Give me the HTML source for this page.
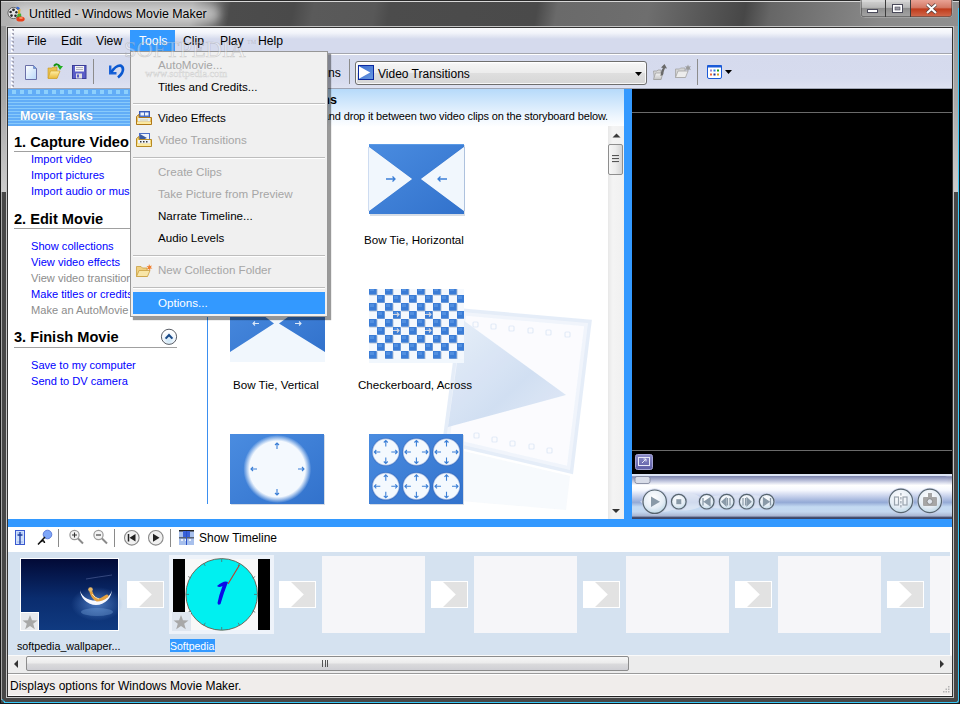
<!DOCTYPE html>
<html><head><meta charset="utf-8">
<style>
*{margin:0;padding:0;box-sizing:border-box}
html,body{width:960px;height:704px;overflow:hidden;background:#5a5a5a;font-family:"Liberation Sans",sans-serif}
.a{position:absolute}
.t{position:absolute;white-space:nowrap;font-family:"Liberation Sans",sans-serif;line-height:1}
#frame{left:0;top:0;width:960px;height:704px;background:linear-gradient(180deg,#6a6a6a 0,#505050 28px,#5c5c5c 100%)}
#title{left:0;top:2px;width:960px;height:24px;background:linear-gradient(100deg,#b2b2b2 0,#a6a6a6 190px,#4c4c4c 228px,#4a4a4a 290px,#5a5a5a 310px,#585858 370px,#4c4c4c 385px,#4a4a4a 530px,#6a6a6a 550px,#6e6e6e 640px,#555 700px,#474747 735px,#666 760px,#7a7a7a 820px,#8a8a8a 870px,#909090 960px)}
#client{left:8px;top:28px;width:944px;height:669px;background:#fff}
#menubar{left:8px;top:28px;width:944px;height:25px;background:linear-gradient(180deg,#fbfcfe 0,#f2f4fa 5px,#dfe3f1 9px,#d5daed 11px,#d5daed 100%)}
#tb{left:8px;top:54px;width:944px;height:35px;background:linear-gradient(180deg,#fff 0,#fff 1px,#d5daed 1px,#d6dbee 70%,#dde1f1 95%,#eef0f8 100%)}
.mi{font-size:12.2px;color:#000;top:35px}
#menu{left:130px;top:51px;width:198px;height:266px;background:#f0f0f0;border:1px solid #979797;box-shadow:3px 3px 1px rgba(0,0,0,.4)}
.mt{font-size:11.6px;color:#000;left:27px}
.md{color:#a6a6a6}
.sep{left:2px;width:192px;height:2px;background:#bdbdbd;border-bottom:1px solid #fff}
#lp{left:8px;top:89px;width:199px;height:429px;background:#fff}
#hdr{left:8px;top:89px;width:199px;height:37px;background:#62adf7}
.h{font-size:14.6px;font-weight:bold;color:#000;left:14px}
.ul{left:14px;width:163px;height:1px;background:#a0a0a0}
.lk{font-size:11.1px;color:#0000ff;left:31px}
.gr{color:#8c8c8c}
#cp{left:208px;top:89px;width:416px;height:429px;background:#fff}
#cph{left:208px;top:89px;width:416px;height:38px;background:linear-gradient(180deg,#b6dafa 0,#d2e8fc 14px,#eef6fe 28px,#fff 38px)}
#pv{left:632px;top:89px;width:320px;height:429px;background:#000}
.cap{font-size:11.6px;color:#000}
.blue{background:#3399ff}
</style></head><body>
<div class="a" style="left:0;top:0;width:960px;height:704px;background:#474747"></div>
<div class="a" style="left:0;top:0;width:960px;height:192px;background:linear-gradient(180deg,#949494 0,#a8a8a8 100px,#cccccc 192px)"></div>
<div id="title" class="a"></div>
<div class="a" style="left:0;top:0;width:960px;height:1px;background:#2a2a2a"></div>
<div class="a" style="left:1px;top:1px;width:958px;height:1px;background:#d8d8d8"></div>
<div class="a" style="left:0;top:0;width:1px;height:704px;background:#1a1a1a"></div>
<div class="a" style="left:959px;top:0;width:1px;height:704px;background:#1a1a1a"></div>
<div class="a" style="left:958px;top:8px;width:1px;height:692px;background:#38c8f8"></div>
<div class="a" style="left:4px;top:702px;width:952px;height:1px;background:#38c8f8"></div><div class="a" style="left:2px;top:699px;width:3px;height:3px;border-left:1px solid #38a8c8;border-bottom:1px solid #38c8f8;border-radius:0 0 0 3px"></div><div class="a" style="left:955px;top:699px;width:4px;height:4px;border-right:1px solid #38c8f8;border-bottom:1px solid #38c8f8;border-radius:0 0 3px 0"></div>
<div class="a" style="left:0;top:703px;width:960px;height:1px;background:#1a1a1a"></div>
<div class="a" style="left:14px;top:5px;width:206px;height:18px;border-radius:9px;background:rgba(235,235,235,.55);filter:blur(4px)"></div>
<!-- title icon -->
<svg class="a" style="left:7px;top:5px" width="18" height="17" viewBox="0 0 18 17">
<circle cx="6.5" cy="8" r="5.6" fill="#e4e4e4" stroke="#5a5a5a" stroke-width=".9"/>
<circle cx="6.5" cy="4.8" r="1.4" fill="#2a2a2a"/><circle cx="3.6" cy="7" r="1.3" fill="#2a2a2a"/><circle cx="4.5" cy="10.6" r="1.3" fill="#2a2a2a"/><circle cx="8.5" cy="10.8" r="1.3" fill="#2a2a2a"/><circle cx="9.4" cy="7.2" r="1.2" fill="#2a2a2a"/>
<path d="M9 2 Q12 1 13 4 L11 5Z" fill="#3a6ad0"/>
<path d="M11 5 L13.5 4 L13 9 L11 9Z" fill="#e0b030"/>
<path d="M10.5 9 L14 8.5 L14.5 13 L10 13Z" fill="#40b030"/>
<ellipse cx="13.5" cy="14" rx="4.2" ry="2.6" fill="#e8401a"/><ellipse cx="14" cy="13" rx="2" ry="1" fill="#f89060"/>
</svg>
<div class="t" style="left:29px;top:8px;font-size:12.4px;color:#000;text-shadow:0 0 3px rgba(255,255,255,.6)">Untitled - Windows Movie Maker</div>
<!-- window buttons -->
<svg class="a" style="left:859px;top:0" width="96" height="20" viewBox="859 0 96 20">
<defs>
<linearGradient id="wb" x1="0" y1="0" x2="0" y2="1"><stop offset="0" stop-color="#d4d4d4"/><stop offset=".45" stop-color="#b8b8b8"/><stop offset=".5" stop-color="#8e8e8e"/><stop offset="1" stop-color="#a4a4a4"/></linearGradient>
<linearGradient id="wc" x1="0" y1="0" x2="0" y2="1"><stop offset="0" stop-color="#e8a294"/><stop offset=".45" stop-color="#d47a66"/><stop offset=".55" stop-color="#c03c1c"/><stop offset="1" stop-color="#d0684c"/></linearGradient>
</defs>
<path d="M860.5 0 V13.5 Q860.5 17.5 864.5 17.5 H948.5 Q952.5 17.5 952.5 13.5 V0" fill="#3c3c3c" stroke="#e0e0e0" stroke-opacity=".5"/>
<path d="M861.5 0 H885 V16.5 H864.5 Q861.5 16.5 861.5 13.5Z" fill="url(#wb)"/>
<rect x="886" y="0" width="24" height="16.5" fill="url(#wb)"/>
<path d="M911 0 H951.5 V13.5 Q951.5 16.5 948.5 16.5 H911Z" fill="url(#wc)"/>
<path d="M861.5 1 H885 M886 1 H910" stroke="#e8e8e8" stroke-opacity=".6"/>
<rect x="867.5" y="9.5" width="10" height="3" fill="#fff" stroke="#4a4a5a"/>
<rect x="892.5" y="4.5" width="10" height="8" fill="#fff" stroke="#4a4a5a"/><rect x="895" y="7" width="5" height="3" fill="#9a9aa4" stroke="#4a4a5a" stroke-width=".6"/>
<path d="M927 4.5 L931.5 8.5 L936 4.5 M927 13 L931.5 9 L936 13" stroke="#4a3a3a" stroke-width="3.6" fill="none" stroke-linejoin="round"/>
<path d="M927 4.5 L931.5 8.5 L936 4.5 M927 13 L931.5 9 L936 13" stroke="#fff" stroke-width="2.2" fill="none"/>
</svg>
<div class="a" style="left:6px;top:26px;width:948px;height:672px;background:#c4c4c4"></div>
<div class="a" style="left:1px;top:192px;width:1px;height:508px;background:#a8a8a8"></div>
<div id="client" class="a"></div>
<div class="a" style="left:7px;top:27px;width:946px;height:670px;border:1px solid #333"></div>
<div id="menubar" class="a"></div>
<div class="a" style="left:8px;top:53px;width:944px;height:1px;background:#a4a6ae"></div>
<div id="tb" class="a"></div>
<div class="a" style="left:8px;top:88px;width:944px;height:1px;background:#9ea4b4"></div>
<!-- grippers -->
<svg class="a" style="left:11px;top:29px" width="4" height="60" viewBox="0 0 4 60"><defs><pattern id="gp" width="4" height="4" patternUnits="userSpaceOnUse"><rect x="0" y="1" width="2" height="2" fill="#fff"/><rect x="1" y="0" width="2" height="2" fill="#a4a4b4"/><rect x="1" y="1" width="1" height="1" fill="#d8d8e4"/></pattern></defs><rect x="0" y="0" width="4" height="23" fill="url(#gp)"/><rect x="0" y="28" width="4" height="32" fill="url(#gp)"/></svg>


<div class="a" style="left:130px;top:30px;width:45px;height:22px;background:#3399ff"></div>
<div class="t mi" style="left:27px">File</div>
<div class="t mi" style="left:61px">Edit</div>
<div class="t mi" style="left:96px">View</div>
<div class="t mi" style="left:139px;color:#fff">Tools</div>
<div class="t mi" style="left:183px">Clip</div>
<div class="t mi" style="left:220px">Play</div>
<div class="t mi" style="left:258px">Help</div>

<!-- toolbar icons -->
<svg class="a" style="left:24px;top:64px" width="14" height="17" viewBox="0 0 14 17"><defs><linearGradient id="nd" x1="0" y1="0" x2="1" y2="1"><stop offset="0" stop-color="#fff"/><stop offset="1" stop-color="#b8d8fa"/></linearGradient></defs><path d="M1.5 1.5 H9.5 L12.5 4.5 V15.5 H1.5 Z" fill="url(#nd)" stroke="#6a70a8"/><path d="M9.5 1.5 V4.5 H12.5" fill="#6aa0e8" stroke="#6a70a8" stroke-width=".6"/></svg>
<svg class="a" style="left:47px;top:63px" width="18" height="17" viewBox="0 0 18 17"><defs><linearGradient id="fo" x1="0" y1="0" x2="0" y2="1"><stop offset="0" stop-color="#fff0a8"/><stop offset="1" stop-color="#e8b838"/></linearGradient></defs><path d="M1 5 H5 L6 4 H10 V15 H1Z" fill="#e8c050" stroke="#c89820" stroke-width=".6"/><path d="M1 15.5 L3.5 8 H13 L10 15.5Z" fill="url(#fo)" stroke="#d0a028" stroke-width=".7"/><path d="M7 3 Q10 -.5 13 3.5" stroke="#109010" stroke-width="2" fill="none"/><path d="M10.5 3 H16 L13 7Z" fill="#20b020"/></svg>
<svg class="a" style="left:72px;top:65px" width="15" height="14" viewBox="0 0 15 14"><rect x=".5" y=".5" width="13.5" height="13" fill="#5a5ec8" stroke="#3c3e98"/><rect x="3" y="1" width="9" height="5.5" fill="#f4f4f4"/><path d="M4 2.5 H11 M4 4.5 H11" stroke="#a0a0b0" stroke-width=".8"/><rect x="4" y="8.5" width="6" height="5" fill="#e0e0e0"/><rect x="5" y="9.5" width="2" height="3" fill="#5a5ec8"/></svg>
<div class="a" style="left:93px;top:59px;width:1px;height:25px;background:#8c8c8c"></div>
<svg class="a" style="left:107px;top:63px" width="18" height="16" viewBox="0 0 18 16"><path d="M3.2 2.5 V10.2 H9.5" fill="none" stroke="#1a62d8" stroke-width="2.4"/><path d="M4 9.5 Q9 2 13.5 2.5 Q17.5 4.5 15 10 Q13.5 12.5 11 14.5" fill="none" stroke="#0a58d0" stroke-width="2.6"/></svg>
<div class="t" style="left:328px;top:67px;font-size:12.2px">ns</div>
<div class="a" style="left:349px;top:59px;width:1px;height:25px;background:#8c8c8c"></div>
<!-- combo -->
<div class="a" style="left:355px;top:61px;width:292px;height:24px;border:1px solid #6e6e6e;border-radius:3px;background:linear-gradient(180deg,#fff 0,#f4f4f4 10%,#ececec 48%,#dedede 52%,#d6d6d6 100%);box-shadow:inset 0 0 0 1px rgba(255,255,255,.8)"></div>
<svg class="a" style="left:358px;top:65px" width="16" height="15" viewBox="0 0 16 15"><defs><linearGradient id="vt" x1="0" y1="0" x2="1" y2="1"><stop offset="0" stop-color="#3a6ad0"/><stop offset="1" stop-color="#6a9ae0"/></linearGradient></defs><rect x=".5" y=".5" width="15" height="14" fill="url(#vt)" stroke="#0a28a0"/><path d="M1 1.2 L12.2 7.5 L1 13.8Z" fill="#fff"/></svg>
<div class="t" style="left:378px;top:68px;font-size:12px">Video Transitions</div>
<svg class="a" style="left:635px;top:72px" width="8" height="5"><path d="M0 0 H7 L3.5 4Z" fill="#000"/></svg>
<svg class="a" style="left:652px;top:63px" width="16" height="18" viewBox="0 0 16 18"><defs><linearGradient id="gf" x1="0" y1="0" x2="0" y2="1"><stop offset="0" stop-color="#f4f4f4"/><stop offset="1" stop-color="#c4c4c4"/></linearGradient></defs><path d="M1.5 8 H5 L6 7 H9 V16.5 H2.5Z" fill="#d8d8d8" stroke="#a0a0a0" stroke-width=".8"/><path d="M1.5 16.5 L3.5 10 H11 L9 16.5Z" fill="url(#gf)" stroke="#a0a0a0" stroke-width=".8"/><path d="M8.5 13 Q9 7 11 5 L9 4.5 L12.5 1 L15 5.5 L13 5.2 Q11.5 8 11 12Z" fill="#6a6a6a"/></svg>
<svg class="a" style="left:675px;top:64px" width="17" height="15" viewBox="0 0 17 15"><path d="M.5 13.5 V5 H4.5 L5.5 4 H10 V13.5Z" fill="#d4d4d4" stroke="#a4a4a4" stroke-width=".8"/><path d="M.5 13.5 L3 7 H13 L10.5 13.5Z" fill="#ececec" stroke="#a4a4a4" stroke-width=".8"/><path d="M13 .5 L13.8 2.6 L16 2.2 L14.6 4 L16 5.8 L13.8 5.4 L13 7.5 L12.2 5.4 L10 5.8 L11.4 4 L10 2.2 L12.2 2.6Z" fill="#9a9a9a"/></svg>
<div class="a" style="left:697px;top:59px;width:1px;height:26px;background:#8c8c8c"></div>
<svg class="a" style="left:707px;top:65px" width="26" height="14" viewBox="0 0 26 14"><rect x=".5" y=".5" width="14" height="13" rx="1.5" fill="#fff" stroke="#1a5ad8"/><rect x="0" y="0" width="15" height="2.5" rx="1" fill="#1a5ad8"/><rect x="3" y="4.5" width="2" height="2" fill="#9a8ad8"/><rect x="6.5" y="4.5" width="2" height="2" fill="#2a7ae8"/><rect x="10" y="4.5" width="2" height="2" fill="#1aa01a"/><rect x="3" y="8.5" width="2" height="2" fill="#f06a3a"/><rect x="6.5" y="8.5" width="2" height="2" fill="#1a2a8a"/><rect x="10" y="8.5" width="2" height="2" fill="#d8a020"/><path d="M18 5 H25 L21.5 9Z" fill="#000"/></svg>

<!-- left pane -->
<div id="lp" class="a"></div>
<div id="hdr" class="a"></div>
<div class="a" style="left:12px;top:90px;width:195px;height:4px;background:repeating-linear-gradient(90deg,#8dd0fc 0,#8dd0fc 4px,transparent 4px,transparent 8px)"></div>
<div class="a" style="left:8px;top:95px;width:199px;height:31px;background:repeating-linear-gradient(180deg,transparent 0,transparent 1px,#88cafb 1px,#88cafb 2px,transparent 2px,transparent 3px)"></div>
<div class="t" style="left:20px;top:110px;font-size:12.4px;font-weight:bold;color:#fff;text-shadow:0 0 1px #4a8ad0">Movie Tasks</div>
<div class="t h" style="top:135px">1. Capture Video</div>
<div class="a ul" style="top:151px"></div>
<div class="t lk" style="top:154px">Import video</div>
<div class="t lk" style="top:170px">Import pictures</div>
<div class="t lk" style="top:186px">Import audio or music</div>
<div class="t h" style="top:212px">2. Edit Movie</div>
<div class="a ul" style="top:228px"></div>
<div class="t lk" style="top:241px">Show collections</div>
<div class="t lk" style="top:257px">View video effects</div>
<div class="t lk gr" style="top:273px">View video transitions</div>
<div class="t lk" style="top:289px">Make titles or credits</div>
<div class="t lk gr" style="top:305px">Make an AutoMovie</div>
<div class="t h" style="top:330px">3. Finish Movie</div>
<div class="a ul" style="top:347px"></div>
<svg class="a" style="left:160px;top:328px" width="18" height="18" viewBox="0 0 18 18"><defs><radialGradient id="cb" cx=".5" cy=".75" r=".6"><stop offset="0" stop-color="#cfe8f8"/><stop offset=".6" stop-color="#f0f6fc"/><stop offset="1" stop-color="#fff"/></radialGradient></defs><circle cx="9" cy="8.8" r="7.6" fill="url(#cb)" stroke="#5a5e66" stroke-width="1"/><path d="M5.6 10.6 L9 7 L12.4 10.6" fill="none" stroke="#1a4a88" stroke-width="2.1"/></svg>
<div class="t lk" style="top:360px">Save to my computer</div>
<div class="t lk" style="top:376px">Send to DV camera</div>
<div class="a" style="left:207px;top:126px;width:1px;height:378px;background:#3b8ff0"></div>

<!-- content pane -->
<div id="cp" class="a"></div>
<div id="cph" class="a"></div>
<div class="t" style="right:623px;top:94px;font-size:12.6px;font-weight:bold">Video Transitions</div>
<div class="t" style="right:352px;top:111px;font-size:11px;letter-spacing:-0.15px">Drag a video transition and drop it between two video clips on the storyboard below.</div>
<!-- scrollbar -->
<div class="a" style="left:608px;top:126px;width:16px;height:393px;background:linear-gradient(90deg,#e8e8e8 0,#f4f4f4 30%,#f0f0f0 100%)"></div>
<svg class="a" style="left:612px;top:133px" width="9" height="5"><path d="M.5 4.5 L4.5 .5 L8.5 4.5Z" fill="#3a3a3a"/></svg>
<div class="a" style="left:608px;top:144px;width:15px;height:31px;border:1px solid #8e8e8e;border-radius:2px;background:linear-gradient(90deg,#f6f6f6 0,#ececec 50%,#d4d4d4 100%)"></div>
<div class="a" style="left:612px;top:155px;width:7px;height:8px;background:repeating-linear-gradient(180deg,#555 0,#555 1px,#ddd 1px,#ddd 2px,transparent 2px,transparent 3px)"></div>
<svg class="a" style="left:612px;top:509px" width="8" height="5"><path d="M0 0 L8 0 L4 4Z" fill="#333"/></svg>

<!-- thumbnails -->
<svg class="a" style="left:208px;top:127px" width="400" height="391" viewBox="208 127 400 391">
<defs>
<linearGradient id="bg1" x1="0" y1="0" x2="1" y2="1"><stop offset="0" stop-color="#4a8ce0"/><stop offset="1" stop-color="#3272cc"/></linearGradient>
<radialGradient id="rg" cx=".5" cy=".5" r=".5"><stop offset=".82" stop-color="#f4f9fe"/><stop offset="1" stop-color="#f4f9fe" stop-opacity="0"/></radialGradient>
<linearGradient id="tri" x1="0" y1="0" x2="1" y2="1"><stop offset="0" stop-color="#e4edf9"/><stop offset=".6" stop-color="#cddcf1"/><stop offset="1" stop-color="#dfe8f6"/></linearGradient>
<pattern id="ck" x="369" y="287" width="16" height="16" patternUnits="userSpaceOnUse"><rect width="16" height="16" fill="#f4f8fd"/><rect x="0.5" y="0.5" width="8" height="8" fill="#b4c2d6"/><rect x="0" y="0" width="7.6" height="7.6" fill="#3a7cd6"/><rect x="8.5" y="8.5" width="8" height="8" fill="#b4c2d6"/><rect x="8" y="8" width="7.6" height="7.6" fill="#3a7cd6"/><rect x="1" y="1" width="4" height="3" fill="#5c98e4" opacity=".7"/><rect x="9" y="9" width="4" height="3" fill="#5c98e4" opacity=".7"/></pattern>
</defs>
<!-- film watermark -->
<g opacity=".9">
<path d="M463 312 L588 323 L570 470 L446 441 Z" fill="none" stroke="#e3ecf8" stroke-width="7"/>
<path d="M463 312 L588 323 L570 470 L446 441 Z" fill="#f6f9fd" fill-opacity=".6"/>
<path d="M463 320 L566 395 L448 427 Z" fill="url(#tri)"/>
<g fill="none" stroke="#dfe8f5" stroke-width="1.2">
<rect x="473" y="322" width="5" height="5" rx="1"/><rect x="491" y="324" width="5" height="5" rx="1"/><rect x="509" y="326" width="5" height="5" rx="1"/><rect x="528" y="328" width="5" height="5" rx="1"/><rect x="546" y="330" width="5" height="5" rx="1"/><rect x="565" y="332" width="5" height="5" rx="1"/>
<rect x="474" y="433" width="5" height="5" rx="1"/><rect x="492" y="437" width="5" height="5" rx="1"/><rect x="510" y="441" width="5" height="5" rx="1"/><rect x="529" y="444" width="5" height="5" rx="1"/><rect x="547" y="448" width="5" height="5" rx="1"/>
</g>
<path d="M446 447 L570 476 L566 510 L450 500Z" fill="#eef3fa" opacity=".5"/>
</g>
<!-- bow tie horizontal -->
<rect x="370" y="145" width="95" height="71" fill="#d6dde6"/>
<rect x="369" y="144" width="95" height="70" fill="url(#bg1)"/>
<path d="M369 147 L412 179 L369 211Z M464 147 L421 179 L464 211Z" fill="#f1f7fd" stroke="#2f6cc4" stroke-width=".8" stroke-opacity=".6"/>
<path d="M369 147 L412 179 L369 211Z M464 147 L421 179 L464 211Z" fill="#f1f7fd"/>
<rect x="369" y="144" width="95" height="1" fill="#5a9ae6"/>
<path d="M386 179 H395 M392.5 176.5 L395 179 L392.5 181.5" stroke="#3b7fd6" stroke-width="1.3" fill="none"/>
<path d="M447 179 H438 M440.5 176.5 L438 179 L440.5 181.5" stroke="#3b7fd6" stroke-width="1.3" fill="none"/>
<!-- bow tie vertical -->
<rect x="230" y="290" width="95" height="72" fill="#f1f7fd"/>
<path d="M230 290 L274 323.5 L230 352Z M325 290 L279 323.5 L325 352Z" fill="url(#bg1)"/>
<path d="M259 323.5 H253 M255 321.5 L253 323.5 L255 325.5" stroke="#dbe8f8" stroke-width="1.1" fill="none"/><path d="M295 323.5 H301 M299 321.5 L301 323.5 L299 325.5" stroke="#dbe8f8" stroke-width="1.1" fill="none"/>
<!-- checkerboard -->
<rect x="369" y="289" width="95" height="74" fill="#f1f7fd"/>
<rect x="369" y="289" width="95" height="70" fill="url(#ck)"/>
<path d="M393 314.5 H399 M397 312.5 L399 314.5 L397 316.5" stroke="#d8d8e0" stroke-width="1.1" fill="none"/><path d="M425 314.5 H431 M429 312.5 L431 314.5 L429 316.5" stroke="#d8d8e0" stroke-width="1.1" fill="none"/><path d="M393 330.5 H399 M397 328.5 L399 330.5 L397 332.5" stroke="#d8d8e0" stroke-width="1.1" fill="none"/><path d="M425 330.5 H431 M429 328.5 L431 330.5 L429 332.5" stroke="#d8d8e0" stroke-width="1.1" fill="none"/>
<!-- iris -->
<rect x="231" y="435" width="94" height="70" fill="#d5dce6"/>
<rect x="230" y="434" width="94" height="70" fill="url(#bg1)"/>
<circle cx="277.3" cy="469" r="34" fill="url(#rg)"/>
<path d="M277 449 V443 M275 445 L277 443 L279 445" stroke="#3b7fd6" stroke-width="1.1" fill="none"/><path d="M277 489 V495 M275 493 L277 495 L279 493" stroke="#3b7fd6" stroke-width="1.1" fill="none"/><path d="M257 469 H251 M253 467 L251 469 L253 471" stroke="#3b7fd6" stroke-width="1.1" fill="none"/><path d="M298 469 H304 M302 467 L304 469 L302 471" stroke="#3b7fd6" stroke-width="1.1" fill="none"/>
<rect x="370" y="435" width="94" height="70" fill="#d5dce6"/>
<rect x="369" y="434" width="94" height="70" fill="url(#bg1)"/>
<g fill="#f4f9fe" stroke="#2a5ab0" stroke-opacity=".35" stroke-width="1.5"><circle cx="385.8" cy="452" r="13.5"/><circle cx="416.4" cy="452" r="13.5"/><circle cx="446.5" cy="452" r="13.5"/><circle cx="385.8" cy="486.3" r="13.5"/><circle cx="416.4" cy="486.3" r="13.5"/><circle cx="446.5" cy="486.3" r="13.5"/></g><path d="M385.8 446.5 V440.5 M383.8 442.5 L385.8 440.5 L387.8 442.5" stroke="#3b7fd6" stroke-width="1.1" fill="none"/><path d="M385.8 457.5 V463.5 M383.8 461.5 L385.8 463.5 L387.8 461.5" stroke="#3b7fd6" stroke-width="1.1" fill="none"/><path d="M380.3 452 H374.3 M376.3 450 L374.3 452 L376.3 454" stroke="#3b7fd6" stroke-width="1.1" fill="none"/><path d="M391.3 452 H397.3 M395.3 450 L397.3 452 L395.3 454" stroke="#3b7fd6" stroke-width="1.1" fill="none"/><path d="M416.4 446.5 V440.5 M414.4 442.5 L416.4 440.5 L418.4 442.5" stroke="#3b7fd6" stroke-width="1.1" fill="none"/><path d="M416.4 457.5 V463.5 M414.4 461.5 L416.4 463.5 L418.4 461.5" stroke="#3b7fd6" stroke-width="1.1" fill="none"/><path d="M410.9 452 H404.9 M406.9 450 L404.9 452 L406.9 454" stroke="#3b7fd6" stroke-width="1.1" fill="none"/><path d="M421.9 452 H427.9 M425.9 450 L427.9 452 L425.9 454" stroke="#3b7fd6" stroke-width="1.1" fill="none"/><path d="M446.5 446.5 V440.5 M444.5 442.5 L446.5 440.5 L448.5 442.5" stroke="#3b7fd6" stroke-width="1.1" fill="none"/><path d="M446.5 457.5 V463.5 M444.5 461.5 L446.5 463.5 L448.5 461.5" stroke="#3b7fd6" stroke-width="1.1" fill="none"/><path d="M441.0 452 H435.0 M437.0 450 L435.0 452 L437.0 454" stroke="#3b7fd6" stroke-width="1.1" fill="none"/><path d="M452.0 452 H458.0 M456.0 450 L458.0 452 L456.0 454" stroke="#3b7fd6" stroke-width="1.1" fill="none"/><path d="M385.8 480.8 V474.8 M383.8 476.8 L385.8 474.8 L387.8 476.8" stroke="#3b7fd6" stroke-width="1.1" fill="none"/><path d="M385.8 491.8 V497.8 M383.8 495.8 L385.8 497.8 L387.8 495.8" stroke="#3b7fd6" stroke-width="1.1" fill="none"/><path d="M380.3 486.3 H374.3 M376.3 484.3 L374.3 486.3 L376.3 488.3" stroke="#3b7fd6" stroke-width="1.1" fill="none"/><path d="M391.3 486.3 H397.3 M395.3 484.3 L397.3 486.3 L395.3 488.3" stroke="#3b7fd6" stroke-width="1.1" fill="none"/><path d="M416.4 480.8 V474.8 M414.4 476.8 L416.4 474.8 L418.4 476.8" stroke="#3b7fd6" stroke-width="1.1" fill="none"/><path d="M416.4 491.8 V497.8 M414.4 495.8 L416.4 497.8 L418.4 495.8" stroke="#3b7fd6" stroke-width="1.1" fill="none"/><path d="M410.9 486.3 H404.9 M406.9 484.3 L404.9 486.3 L406.9 488.3" stroke="#3b7fd6" stroke-width="1.1" fill="none"/><path d="M421.9 486.3 H427.9 M425.9 484.3 L427.9 486.3 L425.9 488.3" stroke="#3b7fd6" stroke-width="1.1" fill="none"/><path d="M446.5 480.8 V474.8 M444.5 476.8 L446.5 474.8 L448.5 476.8" stroke="#3b7fd6" stroke-width="1.1" fill="none"/><path d="M446.5 491.8 V497.8 M444.5 495.8 L446.5 497.8 L448.5 495.8" stroke="#3b7fd6" stroke-width="1.1" fill="none"/><path d="M441.0 486.3 H435.0 M437.0 484.3 L435.0 486.3 L437.0 488.3" stroke="#3b7fd6" stroke-width="1.1" fill="none"/><path d="M452.0 486.3 H458.0 M456.0 484.3 L458.0 486.3 L456.0 488.3" stroke="#3b7fd6" stroke-width="1.1" fill="none"/>
</svg>
<div class="t cap" style="left:364px;top:234px">Bow Tie, Horizontal</div>
<div class="t cap" style="left:233px;top:379px">Bow Tie, Vertical</div>
<div class="t cap" style="left:358px;top:379px">Checkerboard, Across</div>
<!-- blue separators -->
<div class="a blue" style="left:624px;top:89px;width:8px;height:430px"></div>
<div class="a blue" style="left:8px;top:519px;width:944px;height:8px"></div>

<!-- preview -->
<div id="pv" class="a"></div>
<div class="a" style="left:632px;top:112px;width:320px;height:1px;background:#6a6a6a"></div>
<div class="a" style="left:632px;top:450px;width:320px;height:1px;background:#6a6a6a"></div>
<svg class="a" style="left:635px;top:454px" width="18" height="16" viewBox="0 0 18 16"><defs><linearGradient id="fs" x1="0" y1="0" x2="0" y2="1"><stop offset="0" stop-color="#8c8cc8"/><stop offset="1" stop-color="#5c5ca4"/></linearGradient></defs><rect x=".5" y=".5" width="17" height="15" rx="2" fill="url(#fs)" stroke="#a4a4d4"/><rect x="3.5" y="3.5" width="11" height="8" fill="none" stroke="#e8e8f8"/><path d="M7 9 L11 5 M8.5 5 H11 V7.5" stroke="#e8e8f8" fill="none"/></svg>
<svg class="a" style="left:632px;top:474px" width="320" height="45" viewBox="632 474 320 45">
<defs>
<linearGradient id="pb" x1="0" y1="0" x2="0" y2="1"><stop offset="0" stop-color="#dce4f4"/><stop offset=".04" stop-color="#dce4f4"/><stop offset=".06" stop-color="#8088b0"/><stop offset=".22" stop-color="#e8eaf4"/><stop offset=".25" stop-color="#fff"/><stop offset=".36" stop-color="#f6f8fe"/><stop offset=".49" stop-color="#c8d2ec"/><stop offset=".63" stop-color="#94aad6"/><stop offset=".73" stop-color="#c4daf2"/><stop offset=".84" stop-color="#c4d8f0"/><stop offset=".93" stop-color="#aab6d2"/><stop offset=".97" stop-color="#3c4668"/><stop offset="1" stop-color="#3c4668"/></linearGradient>
<linearGradient id="sk" x1="0" y1="0" x2="0" y2="1"><stop offset="0" stop-color="#7a82ac"/><stop offset=".5" stop-color="#b0b6d4"/><stop offset="1" stop-color="#eceef6"/></linearGradient>
<radialGradient id="bf" cx=".45" cy=".35" r=".7"><stop offset="0" stop-color="#ffffff"/><stop offset=".6" stop-color="#e6eef6"/><stop offset="1" stop-color="#b8d4e4"/></radialGradient>
</defs>
<rect x="632" y="474" width="320" height="45" fill="url(#pb)"/>
<rect x="634" y="476" width="314" height="8" rx="4" fill="url(#sk)"/>
<rect x="635" y="476.5" width="15" height="7" rx="2" fill="#d8dce8" stroke="#7a8096" stroke-width=".8"/>
<path d="M640 501.7 Q660 488 672 494 Q690 490 700 497 Q740 492 772 497 L772 507 Q740 511 700 507 Q690 512 672 510 Q660 516 640 501.7Z" fill="#dfe6f4" opacity=".8"/>
<circle cx="654.7" cy="501.7" r="13.2" fill="#c4cce6" opacity=".7"/><circle cx="654.7" cy="501.7" r="11.7" fill="url(#bf)" stroke="#56646e" stroke-width="1.2"/><circle cx="678.8" cy="501.7" r="8.8" fill="#c4cce6" opacity=".7"/><circle cx="678.8" cy="501.7" r="7.3" fill="url(#bf)" stroke="#56646e" stroke-width="1.2"/><circle cx="706.7" cy="501.7" r="8.8" fill="#c4cce6" opacity=".7"/><circle cx="706.7" cy="501.7" r="7.3" fill="url(#bf)" stroke="#56646e" stroke-width="1.2"/><circle cx="726.7" cy="501.7" r="8.8" fill="#c4cce6" opacity=".7"/><circle cx="726.7" cy="501.7" r="7.3" fill="url(#bf)" stroke="#56646e" stroke-width="1.2"/><circle cx="746.7" cy="501.7" r="8.8" fill="#c4cce6" opacity=".7"/><circle cx="746.7" cy="501.7" r="7.3" fill="url(#bf)" stroke="#56646e" stroke-width="1.2"/><circle cx="766.7" cy="501.7" r="8.8" fill="#c4cce6" opacity=".7"/><circle cx="766.7" cy="501.7" r="7.3" fill="url(#bf)" stroke="#56646e" stroke-width="1.2"/><circle cx="900.9" cy="500.9" r="13.2" fill="#c4cce6" opacity=".7"/><circle cx="900.9" cy="500.9" r="11.7" fill="url(#bf)" stroke="#56646e" stroke-width="1.2"/><circle cx="929.8" cy="500.9" r="13.2" fill="#c4cce6" opacity=".7"/><circle cx="929.8" cy="500.9" r="11.7" fill="url(#bf)" stroke="#56646e" stroke-width="1.2"/>
<path d="M651 496.5 L660 501.7 L651 507Z" fill="#8a9aa8"/>
<rect x="676.3" y="499.2" width="5" height="5" fill="#8a9aa8"/>
<path d="M703 498 V505.5 M710 498 L704.5 501.7 L710 505.5Z" stroke="#8a9aa8" fill="#8a9aa8" stroke-width="1.3"/>
<path d="M722 501.7 L726 498 V505.5Z M727.5 498 V505.5 M730 498 V505.5" stroke="#8a9aa8" fill="#8a9aa8" stroke-width="1.2"/>
<path d="M743 498 V505.5 M745.5 498 V505.5 M747 498 L751 501.7 L747 505.5Z" stroke="#8a9aa8" fill="#8a9aa8" stroke-width="1.2"/>
<path d="M763.5 498 L769 501.7 L763.5 505.5Z M770.5 498 V505.5" stroke="#8a9aa8" fill="#8a9aa8" stroke-width="1.3"/>
<g fill="none" stroke="#9aa4ae" stroke-width="1.2"><rect x="894.5" y="497" width="4" height="8"/><rect x="903" y="497" width="4" height="8"/><path d="M900.9 493 V509" stroke-dasharray="2.5 1.5"/></g>
<g fill="#a6a6a6"><rect x="923" y="497" width="14" height="9" rx="1"/><rect x="928" y="493" width="4" height="4"/></g><circle cx="929.8" cy="501.5" r="2.8" fill="#e0e6ee" stroke="#8a8a8a"/>
</svg>

<!-- storyboard toolbar -->
<div class="a" style="left:8px;top:527px;width:944px;height:25px;background:#fff"></div>
<svg class="a" style="left:8px;top:526px" width="200" height="25" viewBox="8 526 200 25">
<rect x="15.5" y="530.5" width="9" height="14" fill="#cfe0fb" stroke="#3a5ad0"/><path d="M17 533 H23 M17 542 H23" stroke="#9ab4f0"/><path d="M20 532 V544 M17.5 535 H22.5" stroke="#1a3aa0" stroke-width="1.3"/>
<circle cx="47.5" cy="534.5" r="4.3" fill="#7ea6f8" stroke="#4a6ad0" stroke-width=".8"/><path d="M45 537 L38 544.5 M40.5 542 Q44 539 44.5 543" stroke="#111" stroke-width="1.6" fill="none"/>
<rect x="58" y="529" width="1" height="18" fill="#8a8a8a"/>
<circle cx="74.5" cy="535" r="4.6" fill="#f4f4f4" stroke="#9a9a9a" stroke-width="1.2"/><path d="M72 535 H77 M74.5 532.5 V537.5" stroke="#333" stroke-width="1.1"/><path d="M78 538.5 L83 543.5" stroke="#8a8a8a" stroke-width="2"/>
<circle cx="98.5" cy="535" r="4.6" fill="#f4f4f4" stroke="#9a9a9a" stroke-width="1.2"/><path d="M96 535 H101" stroke="#333" stroke-width="1.1"/><path d="M102 538.5 L107 543.5" stroke="#8a8a8a" stroke-width="2"/>
<rect x="114" y="529" width="1" height="18" fill="#8a8a8a"/>
<circle cx="131.8" cy="537.8" r="7.3" fill="#f0f0f0" stroke="#8a8a8a" stroke-width="1.1"/><path d="M128.5 534 V541.5" stroke="#222" stroke-width="1.5"/><path d="M135.5 534 V541.5 L129.5 537.8Z" fill="#222"/>
<circle cx="155.8" cy="537.8" r="7.3" fill="#f0f0f0" stroke="#8a8a8a" stroke-width="1.1"/><path d="M153 533.8 L159.5 537.8 L153 541.8Z" fill="#222"/>
<rect x="170" y="529" width="1" height="18" fill="#8a8a8a"/>
<rect x="179" y="531" width="15" height="14" fill="#a8c0ec"/><rect x="179" y="530" width="15" height="1.5" fill="#222"/><rect x="183" y="531" width="7" height="6" fill="#3a62d8"/><rect x="179" y="537" width="15" height="1.5" fill="#222" opacity=".6"/><path d="M181 540 H183 M185 540 H187 M189 540 H191" stroke="#fff" stroke-width="1.5"/><rect x="186" y="531" width="1" height="14" fill="#2a52c8"/>
</svg>
<div class="t" style="left:199px;top:532px;font-size:12px">Show Timeline</div>
<!-- storyboard -->
<div class="a" style="left:8px;top:552px;width:942px;height:103px;background:#d5e2f0"></div>
<svg class="a" style="left:8px;top:551px" width="942" height="104" viewBox="8 551 942 104">
<defs>
<linearGradient id="wall" x1="0" y1="0" x2="0" y2="1"><stop offset="0" stop-color="#020a36"/><stop offset=".55" stop-color="#0a2c6e"/><stop offset="1" stop-color="#103a80"/></linearGradient>
<radialGradient id="glow" cx=".5" cy=".5" r=".5"><stop offset="0" stop-color="#5a8ad0" stop-opacity=".8"/><stop offset="1" stop-color="#5a8ad0" stop-opacity="0"/></radialGradient>
<g id="star"><path d="M9 2 L11 7.2 L16.5 7.4 L12.2 10.8 L13.8 16.2 L9 13 L4.2 16.2 L5.8 10.8 L1.5 7.4 L7 7.2Z" fill="#a8a8a8"/></g>
<g id="tr"><rect x="0" y="0" width="37" height="27" fill="#fff"/><path d="M12 1 H36 V26 H12 L24.8 13.5Z" fill="#e2e2e2"/></g>
</defs>
<rect x="20" y="558" width="99" height="73" fill="#fff"/>
<rect x="21" y="559" width="97" height="71" fill="url(#wall)"/>
<ellipse cx="97" cy="604" rx="26" ry="17" fill="url(#glow)"/>
<ellipse cx="97" cy="612" rx="16" ry="4" fill="#7aa8e0" opacity=".35"/>
<path d="M80 589 A16 16 0 0 0 112 589 A16 11.5 0 0 1 80 589Z" fill="#f6f8ff"/>
<path d="M91 592 Q93 598 97 600 Q102 600 107 596" stroke="#e3a040" stroke-width="3" fill="none" stroke-linecap="round"/>
<circle cx="90.5" cy="589.5" r="2.3" fill="#e8b868"/>
<path d="M92 594 Q95 598 99 599" stroke="#f8e0b0" stroke-width="1" fill="none"/>
<path d="M86 579 Q98 577 112 575" stroke="#6a7ab0" stroke-width=".8" fill="none" opacity=".6"/>
<rect x="20" y="612" width="19" height="19" fill="#fff"/><rect x="21" y="613" width="17" height="17" fill="#e8eaee"/>
<use href="#star" x="21" y="613"/>
<use href="#tr" x="127" y="581"/>
<rect x="169" y="555" width="105" height="79" fill="#eef3fa"/>
<rect x="173" y="559" width="97" height="71" fill="#f8f8f8"/>
<rect x="173" y="559" width="12" height="71" fill="#000"/>
<rect x="258" y="559" width="12" height="71" fill="#000"/>
<circle cx="221.7" cy="594.4" r="35.8" fill="#00f0f0" stroke="#6a5a4a" stroke-width=".9"/>
<g stroke="#5a6a6a" stroke-width=".8">
<path d="M221.7 559 V562 M221.7 627 V630 M186 594.4 H189 M254 594.4 H257"/>
<path d="M239.6 563.4 L238.1 566 M255.2 576.5 L252.6 578 M255.2 612.3 L252.6 610.8 M239.6 625.4 L238.1 622.8 M203.8 625.4 L205.3 622.8 M188.2 612.3 L190.8 610.8 M188.2 576.5 L190.8 578 M203.8 563.4 L205.3 566"/>
</g>
<path d="M228 584 L239.5 565" stroke="#c03a2a" stroke-width="1.1"/>
<path d="M217 586 Q224 580 228 582 Q224 592 220.5 604 Q218 606 217.5 603 Q219 595 222.5 586 Q219 588 217 586Z" fill="#0a0ae8"/>
<rect x="172" y="612" width="19" height="19" fill="#dfe6ef"/>
<use href="#star" x="172" y="613"/>
<use href="#tr" x="279" y="581"/>
<rect x="322" y="556" width="103" height="77" fill="#f6f6f9"/>
<use href="#tr" x="431" y="581"/>
<rect x="474" y="556" width="103" height="77" fill="#f6f6f9"/>
<use href="#tr" x="583" y="581"/>
<rect x="626" y="556" width="103" height="77" fill="#f6f6f9"/>
<use href="#tr" x="735" y="581"/>
<rect x="778" y="556" width="103" height="77" fill="#f6f6f9"/>
<use href="#tr" x="887" y="581"/>
<rect x="930" y="556" width="103" height="77" fill="#f6f6f9"/>
<use href="#tr" x="1039" y="581"/>
<rect x="930" y="556" width="20" height="77" fill="#f6f6f9"/>
</svg>
<div class="t" style="left:17px;top:641px;font-size:10.7px">softpedia_wallpaper...</div>
<div class="a" style="left:170px;top:639px;width:45px;height:13px;background:#3399ff"></div>
<div class="t" style="left:170px;top:641px;font-size:10.5px;color:#fff">Softpedia</div>
<!-- scrollbar bottom -->
<div class="a" style="left:8px;top:655px;width:944px;height:1px;background:#fafafa"></div>
<div class="a" style="left:8px;top:656px;width:944px;height:17px;background:#ececec"></div>
<svg class="a" style="left:13px;top:660px" width="6" height="9"><path d="M5 0 V8 L1 4Z" fill="#333"/></svg>
<svg class="a" style="left:939px;top:660px" width="6" height="9"><path d="M1 0 V8 L5 4Z" fill="#333"/></svg>
<div class="a" style="left:26px;top:656px;width:603px;height:15px;border:1px solid #8c8c8c;border-radius:2px;background:linear-gradient(180deg,#f6f6f6 0,#ececec 45%,#dadadc 55%,#cfcfd4 100%)"></div>
<div class="a" style="left:322px;top:660px;width:7px;height:7px;background:repeating-linear-gradient(90deg,#555 0,#555 1px,transparent 1px,transparent 2.5px)"></div>
<!-- status -->
<div class="a" style="left:8px;top:673px;width:944px;height:1px;background:#9a9a9a"></div>
<div class="a" style="left:8px;top:674px;width:944px;height:1px;background:#fff"></div>
<div class="a" style="left:8px;top:675px;width:944px;height:20px;background:#f0edeb"></div>
<div class="a" style="left:8px;top:695px;width:944px;height:1px;background:#fff"></div>
<div class="a" style="left:7px;top:696px;width:946px;height:1px;background:#222"></div>
<div class="t" style="left:10px;top:680px;font-size:12px">Displays options for Windows Movie Maker.</div>
<svg class="a" style="left:941px;top:685px" width="10" height="10"><g fill="#b4b4b4"><rect x="7" y="1" width="1.5" height="1.5"/><rect x="4.5" y="3.5" width="1.5" height="1.5"/><rect x="7" y="3.5" width="1.5" height="1.5"/><rect x="2" y="6" width="1.5" height="1.5"/><rect x="4.5" y="6" width="1.5" height="1.5"/><rect x="7" y="6" width="1.5" height="1.5"/></g></svg>
<!-- menu -->
<div id="menu" class="a">

 <svg class="a" style="left:5px;top:59px" width="17" height="16" viewBox="0 0 17 16"><defs><linearGradient id="gb" x1="0" y1="0" x2="0" y2="1"><stop offset="0" stop-color="#fbe7a0"/><stop offset="1" stop-color="#e0a830"/></linearGradient></defs><rect x="3.5" y=".5" width="10" height="7" fill="#4a70c8" stroke="#3a5ab8"/><rect x="4.5" y="1.5" width="3.5" height="3" fill="#f0f4fc"/><rect x="9" y="1.5" width="3.5" height="3" fill="#f0f4fc"/><path d="M.5 13.5 V5.5 L3 3.5 V6.5 H15.5 V13.5Z" fill="url(#gb)" stroke="#b07818"/><rect x="2" y="7" width="12" height="3.5" fill="#e4eef6"/><path d="M4 9 H12" stroke="#d8c890" stroke-width=".8"/><rect x="1" y="11" width="14" height="2" fill="#fbe9a0"/></svg>
 <svg class="a" style="left:5px;top:81px" width="17" height="16" viewBox="0 0 17 16"><rect x="3.5" y=".5" width="10" height="8" fill="#eef3fb" stroke="#4a6ec8"/><path d="M4 1 L11 5 L4 8Z" fill="#3a5aa0"/><path d="M.5 13.5 V5.5 L3 3.5 V6.5 H15.5 V13.5Z" fill="#f5d77a" stroke="#b78a24"/><rect x="2" y="7" width="12" height="3.5" fill="#eef3fb"/><rect x="4" y="8" width="1.5" height="1.5" fill="#333"/><rect x="7" y="8" width="1.5" height="1.5" fill="#333"/><rect x="10" y="8" width="1.5" height="1.5" fill="#333"/><rect x="1" y="11" width="14" height="2" fill="#fbe9a0"/></svg>
 <svg class="a" style="left:5px;top:211px" width="18" height="15" viewBox="0 0 18 15"><path d="M.5 13.5 V3.5 H5 L6.5 5 H11 V13.5Z" fill="#f0d080" stroke="#c9a040" stroke-width=".8"/><path d="M.5 13.5 L3 7.5 H14 L11.5 13.5Z" fill="#f8e6a8" stroke="#c9a040" stroke-width=".8"/><path d="M13 1 L14 3 L16 2.5 L14.8 4.3 L16.5 5.5 L14.3 5.6 L14 8 L13 6 L11 6.5 L12 4.5 L10.5 3 L12.6 3.2Z" fill="#f08030"/></svg>
 <div class="t mt md" style="top:7px">AutoMovie...</div>
 <div class="t mt" style="top:29px">Titles and Credits...</div>
 <div class="a sep" style="top:51px"></div>
 <div class="t mt" style="top:60px">Video Effects</div>
 <div class="t mt md" style="top:82px">Video Transitions</div>
 <div class="a sep" style="top:105px"></div>
 <div class="t mt md" style="top:114px">Create Clips</div>
 <div class="t mt md" style="top:136px">Take Picture from Preview</div>
 <div class="t mt" style="top:158px">Narrate Timeline...</div>
 <div class="t mt" style="top:180px">Audio Levels</div>
 <div class="a sep" style="top:203px"></div>
 <div class="t mt md" style="top:212px">New Collection Folder</div>
 <div class="a sep" style="top:235px"></div>
 <div class="a" style="left:2px;top:240px;width:192px;height:22px;background:#3399ff"></div>
 <div class="t mt" style="top:245px;color:#fff">Options...</div>
</div>
<div class="t" style="left:124px;top:39px;font-family:'Liberation Serif',serif;font-size:22.6px;color:rgba(255,255,255,.35);-webkit-text-stroke:.7px rgba(110,110,110,.28)">SOFTPEDIA</div>
<div class="t" style="left:247px;top:39px;font-family:'Liberation Serif',serif;font-size:6px;color:rgba(120,120,120,.3)">TM</div>
<div class="t" style="left:145px;top:69px;font-family:'Liberation Serif',serif;font-size:10.3px;color:rgba(255,255,255,.4);-webkit-text-stroke:.5px rgba(110,110,110,.25)">www.softpedia.com</div>
</body></html>
